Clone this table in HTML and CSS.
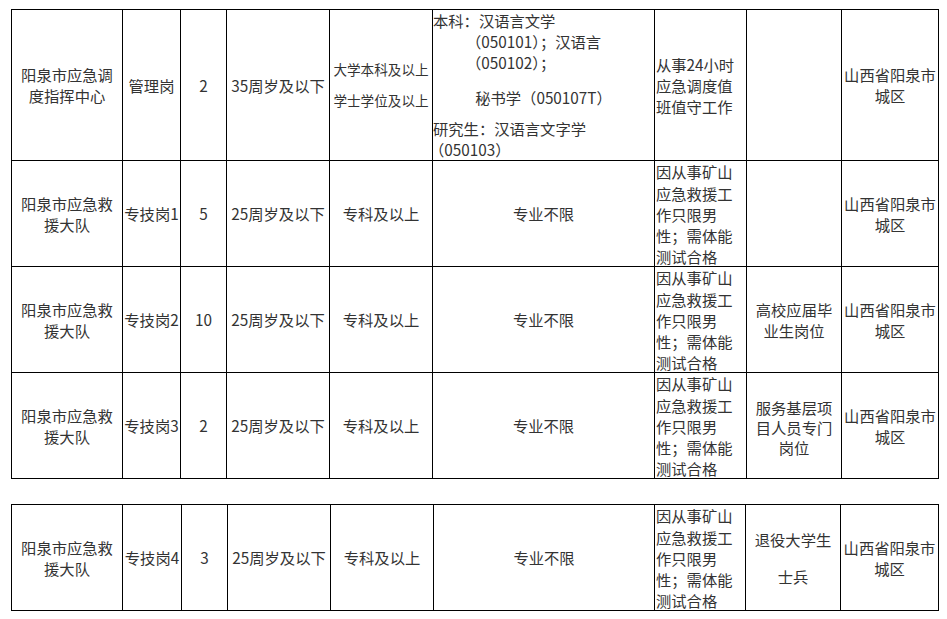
FILE: index.html
```html
<!DOCTYPE html>
<html lang="zh-CN">
<head>
<meta charset="utf-8">
<title>岗位表</title>
<link rel="stylesheet" href="styles.css">
</head>
<body>
<div class="page">
  <div class="sheet sheet-a">
    <div class="cell">阳泉市应急调<br>度指挥中心</div>
    <div class="cell">管理岗</div>
    <div class="cell">2</div>
    <div class="cell">35周岁及以下</div>
    <div class="cell small">大学本科及以上<br>学士学位及以上</div>
    <div class="cell major">
      <div class="ml">本科：汉语言文学</div>
      <div class="ml ind">（050101）；汉语言</div>
      <div class="ml ind">（050102）；</div>
      <div class="ml ctr gap1">秘书学（050107T）</div>
      <div class="ml gap2">研究生：汉语言文字学</div>
      <div class="ml gap3 neg">（050103）</div>
    </div>
    <div class="cell left">从事24小时<br>应急调度值<br>班值守工作</div>
    <div class="cell"></div>
    <div class="cell">山西省阳泉市<br>城区</div>

    <div class="cell">阳泉市应急救<br>援大队</div>
    <div class="cell nowrap">专技岗1</div>
    <div class="cell">5</div>
    <div class="cell">25周岁及以下</div>
    <div class="cell">专科及以上</div>
    <div class="cell">专业不限</div>
    <div class="cell left tall">因从事矿山<br>应急救援工<br>作只限男<br>性；需体能<br>测试合格</div>
    <div class="cell"></div>
    <div class="cell">山西省阳泉市<br>城区</div>

    <div class="cell">阳泉市应急救<br>援大队</div>
    <div class="cell nowrap">专技岗2</div>
    <div class="cell">10</div>
    <div class="cell">25周岁及以下</div>
    <div class="cell">专科及以上</div>
    <div class="cell">专业不限</div>
    <div class="cell left tall">因从事矿山<br>应急救援工<br>作只限男<br>性；需体能<br>测试合格</div>
    <div class="cell">高校应届毕<br>业生岗位</div>
    <div class="cell">山西省阳泉市<br>城区</div>

    <div class="cell">阳泉市应急救<br>援大队</div>
    <div class="cell nowrap">专技岗3</div>
    <div class="cell">2</div>
    <div class="cell">25周岁及以下</div>
    <div class="cell">专科及以上</div>
    <div class="cell">专业不限</div>
    <div class="cell left tall">因从事矿山<br>应急救援工<br>作只限男<br>性；需体能<br>测试合格</div>
    <div class="cell tight">服务基层项<br>目人员专门<br>岗位</div>
    <div class="cell">山西省阳泉市<br>城区</div>
  </div>

  <div class="sheet sheet-b">
    <div class="cell">阳泉市应急救<br>援大队</div>
    <div class="cell nowrap">专技岗4</div>
    <div class="cell">3</div>
    <div class="cell">25周岁及以下</div>
    <div class="cell">专科及以上</div>
    <div class="cell">专业不限</div>
    <div class="cell left tall">因从事矿山<br>应急救援工<br>作只限男<br>性；需体能<br>测试合格</div>
    <div class="cell wide">退役大学生<br>士兵</div>
    <div class="cell">山西省阳泉市<br>城区</div>
  </div>
</div>
</body>
</html>
```
FILE: styles.css
```css
* {
  box-sizing: border-box;
}

html, body {
  margin: 0;
  padding: 0;
  background: #fff;
}

body {
  font-family: "Noto Sans CJK SC", "Noto Sans", sans-serif;
  font-size: 15.3px;
  line-height: 21px;
  color: #333;
}

.page {
  padding: 9px 0 0 11px;
  display: flex;
  flex-direction: column;
  gap: 25px;
  align-items: flex-start;
}

.sheet {
  display: grid;
  border-left: 1px solid #000;
  border-top: 1px solid #000;
}

.sheet-a {
  grid-template-columns: 111px 58px 46px 103px 103px 222px 92px 95px 97px;
  grid-template-rows: 151px 106px 106px 106px;
}

.sheet-b {
  grid-template-columns: 111px 59px 46px 103px 103px 221px 91px 95px 98px;
  grid-template-rows: 106px;
}

.cell {
  border-right: 1px solid #000;
  border-bottom: 1px solid #000;
  display: flex;
  align-items: center;
  justify-content: center;
  text-align: center;
  padding: 0;
  min-width: 0;
  overflow: visible;
}

.left {
  justify-content: flex-start;
  text-align: left;
  padding-left: 1px;
}

.tall {
  line-height: 21.3px;
  padding-top: 2px;
}

.tight {
  line-height: 20px;
  padding-top: 3px;
}

.wide {
  line-height: 37px;
}

.nowrap {
  white-space: nowrap;
}

.small {
  font-size: 13.6px;
  line-height: 31px;
}

.major {
  display: block;
  text-align: left;
  padding: 0;
}

.ml {
  white-space: nowrap;
}

.ind {
  padding-left: 33px;
}

.ctr {
  text-align: center;
}

.gap1 {
  margin-top: 13.5px;
}

.gap2 {
  margin-top: 10px;
}

.gap3 {
  margin-top: 0.5px;
}

.neg {
  margin-left: -4px;
}
```
